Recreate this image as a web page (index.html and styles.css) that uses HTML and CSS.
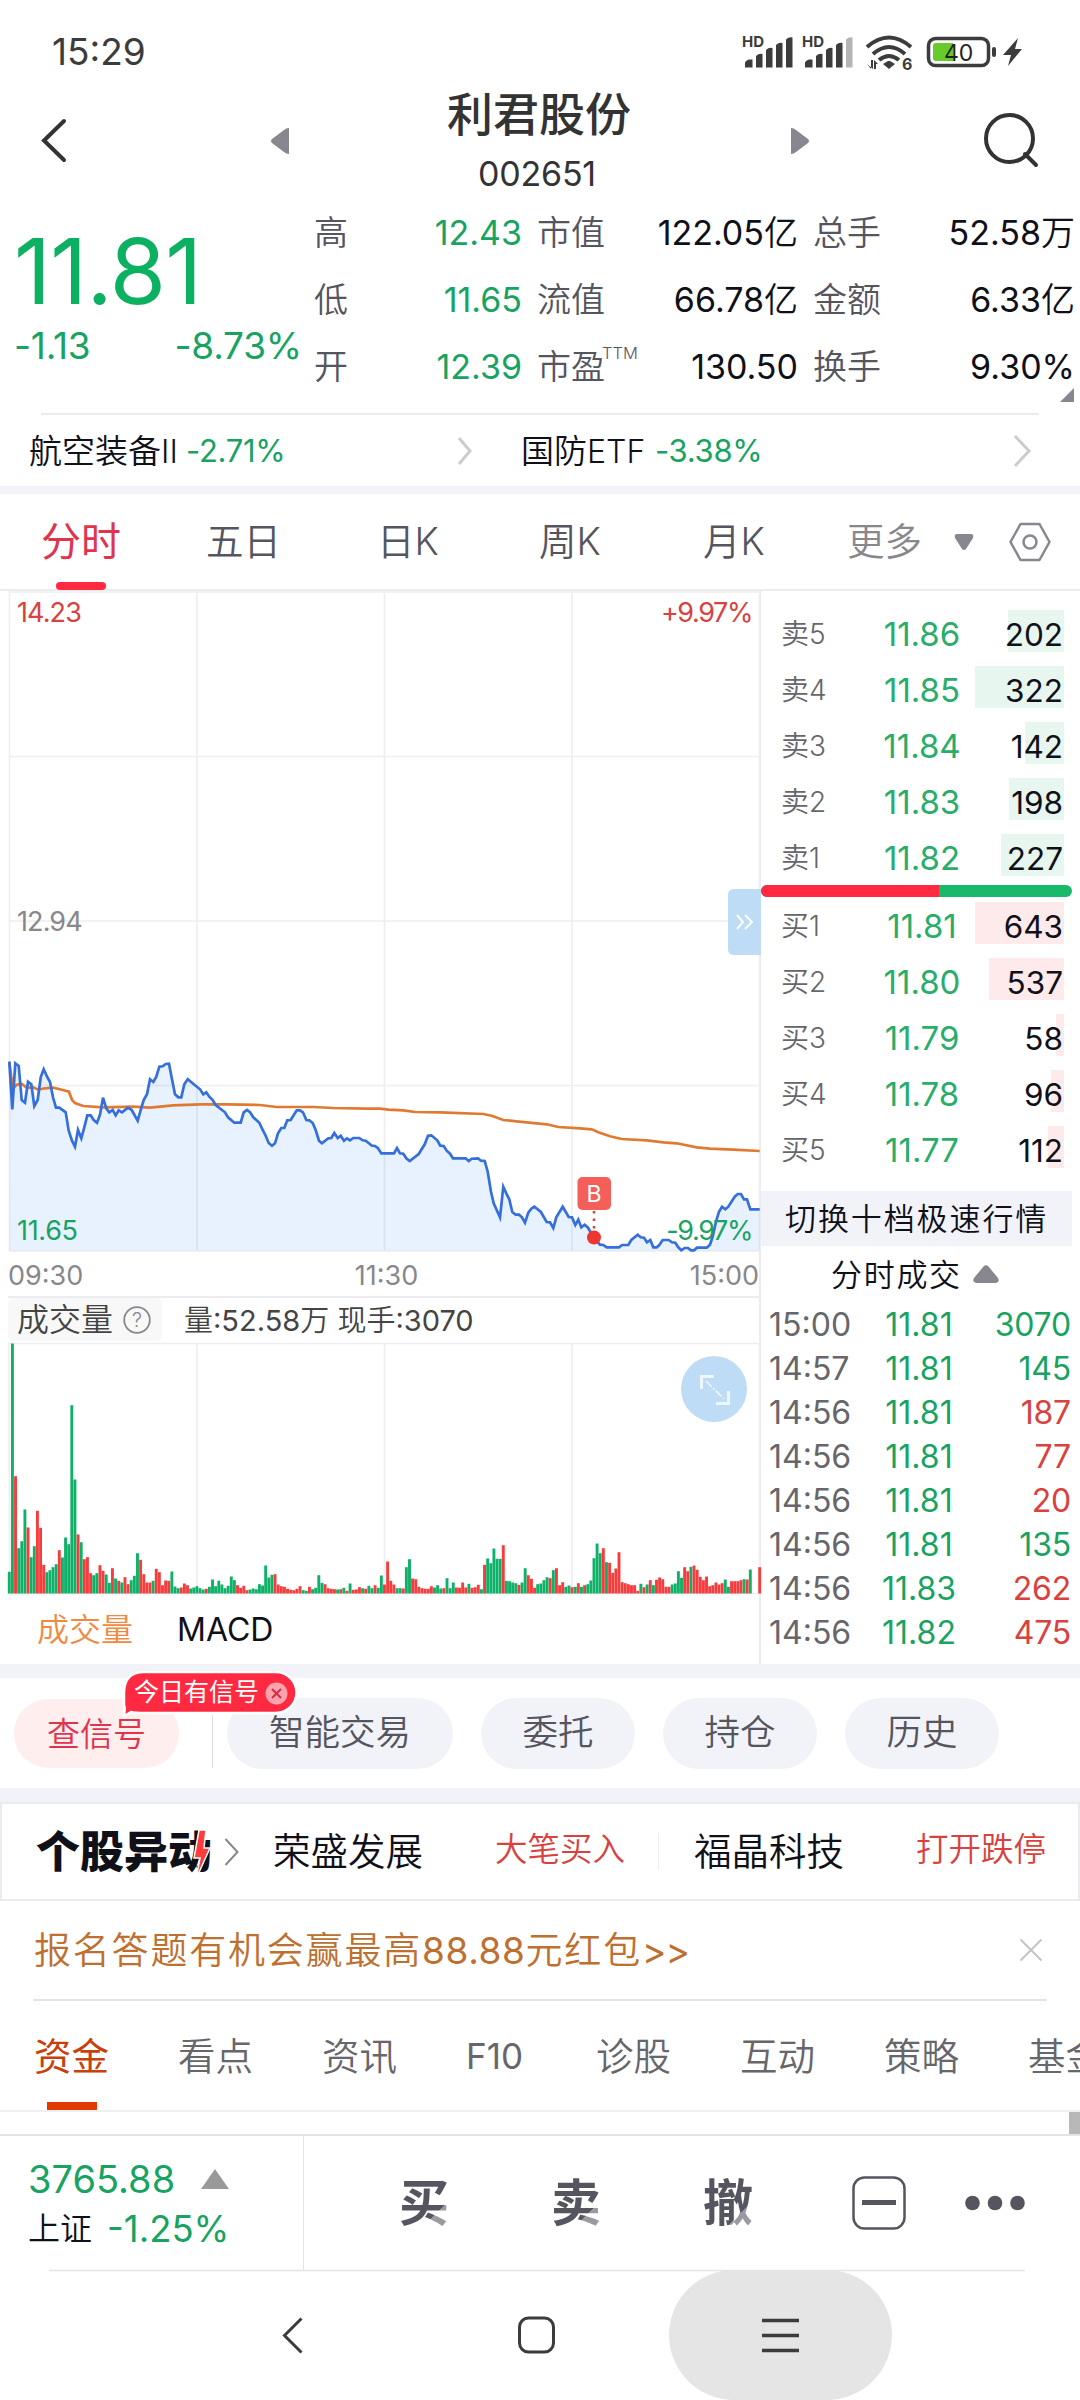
FILE: index.html
```html
<!DOCTYPE html>
<html lang="zh-CN">
<head>
<meta charset="utf-8">
<title>利君股份 002651</title>
<link rel="stylesheet" href="styles.css">
</head>
<body>
<div class="status">
  <span class="clock">15:29</span>
  <svg class="status-icons" width="310" height="60" viewBox="0 0 310 60">
    <g fill="#3c3c3c">
      <g id="sim"><path d="M15 47.500V43q0-2 4-3.500h3.500v8zM26 47.500V36q3-3 6.500-2v13.500zM36 47.500V30q3-3 6.500-2v19.500zM46 47.500V25q3-3 6.500-2v24.500z"/></g>
      <path d="M56 47.500V19.500q3-3 6.500-2v30z"/>
      <use href="#sim" x="60"/>
      <path d="M116 47.500V19.500q3-3 6.500-2v30z" fill="#b4b4b4"/>
      <path d="M273 35l15-17-3 11h7l-14 17 3-11z"/>
      <rect x="262" y="27" width="4" height="10" rx="2"/>
      <path d="M153 44l5-3h2l5 3-6 5z"/>
      <path d="M137 44l4 5v-9h2v9zM144 49v-9l4 4h-2v5z"/>
    </g>
    <text class="hd" x="12" y="27">HD</text><text class="hd" x="72" y="27">HD</text>
    <g fill="none" stroke="#3c3c3c" stroke-width="4"><path d="M137 27q22-19 44 0M143 34q16-14 32 0M149 40q10-8 20 0"/></g>
    <text class="six" x="172" y="49.500">6</text>
    <rect x="198.500" y="18.500" width="60" height="27" rx="7" fill="none" stroke="#3c3c3c" stroke-width="3.500"/>
    <path d="M203 26q0-3 3-3h17v18h-17q-3 0-3-3z" fill="#67cc2b"/>
    <text class="bat" x="214" y="40.500">40</text>
  </svg>
</div>

<header class="header">
  <svg width="40" height="60" viewBox="36 110 40 60"><path d="M64 121L44 140.500 64 160" class="ic"/></svg>
  <svg class="prev" width="20" height="30" viewBox="270 125 20 30"><path d="M289 128v26q-3 0-5-2l-12-9q-2-2 0-4l12-9q2-2 5-2z" fill="#88878f"/></svg>
  <div class="title"><h1>利君股份</h1><span>002651</span></div>
  <svg class="next" width="20" height="30" viewBox="790 125 20 30"><path d="M791 128v26q3 0 5-2l12-9q2-2 0-4l-12-9q-2-2-5-2z" fill="#88878f"/></svg>
  <svg class="search" width="60" height="60" viewBox="980 110 60 60"><circle cx="1009.500" cy="138.500" r="23.500" class="ic"/><path d="M1025 154l11 11" class="ic"/></svg>
</header>

<section class="quote green">
  <div class="last">
    <div class="price">11.81</div>
    <div class="chg"><span>-1.13</span><span>-8.73%</span></div>
  </div>
  <div class="stats">
    <span class="k">高</span><span class="v green">12.43</span><span class="k">市值</span><span class="v">122.05<i>亿</i></span><span class="k">总手</span><span class="v">52.58<i>万</i></span>
    <span class="k">低</span><span class="v green">11.65</span><span class="k">流值</span><span class="v">66.78<i>亿</i></span><span class="k">金额</span><span class="v">6.33<i>亿</i></span>
    <span class="k">开</span><span class="v green">12.39</span><span class="k">市盈<sup>TTM</sup></span><span class="v">130.50</span><span class="k">换手</span><span class="v">9.30%</span>
    <svg class="corner" width="14" height="14"><path d="M14 0v14H0z" fill="#88878f"/></svg>
  </div>
</section>

<section class="sectors">
  <span class="s1">航空装备<i>II</i></span><b class="p1">-2.71%</b>
  <svg class="c1" width="20" height="34" viewBox="0 0 20 34"><path d="M4 4l11 13L4 30" class="chev"/></svg>
  <span class="s2">国防<i>ETF</i></span><b class="p2">-3.38%</b>
  <svg class="c2" width="22" height="36" viewBox="0 0 22 36"><path d="M4 3l14 15L4 33" class="chev"/></svg>
</section>
<div class="band thin"></div>

<nav class="ktabs">
  <span class="on">分时</span><span>五日</span><span>日K</span><span>周K</span><span>月K</span><span class="more">更多</span>
  <svg width="20" height="18" viewBox="0 0 20 18"><path d="M3 1h14q3 0 2 4l-7 11q-2 2-4 0L1 5q-1-4 2-4z" fill="#88878f"/></svg>
  <svg class="hex" width="44" height="42" viewBox="0 0 44 42"><path d="M12.500 3h19l10 18-10 18h-19l-10-18z" fill="none" stroke="#88878f" stroke-width="2.500" stroke-linejoin="round"/><circle cx="22" cy="21" r="6.500" fill="none" stroke="#88878f" stroke-width="2.500"/></svg>
</nav>

<main class="main">
  <div class="left">
    <div class="chart">
      <svg id="price" width="761" height="661" viewBox="0 591 761 661">
        <g class="grid"><path d="M9.500 592H759.500V1251H9.500zM197 592v659M384.500 592v659M572 592v659M9.500 756.500H759.500M9.500 921H759.500M9.500 1085.500H759.500"/></g>
        <path id="area" fill="#2b7bf3" fill-opacity=".11"/>
        <path id="avg" class="avg"/>
        <path id="line" class="line"/>
        <path d="M594 1211v22" stroke="#d8413e" stroke-width="2.500" stroke-dasharray="2.500 5"/>
        <circle cx="594" cy="1237.500" r="7" fill="#ef352f"/>
        <rect x="577.500" y="1177" width="33.500" height="33" rx="5" fill="#f46059"/>
        <text class="mark" x="594" y="1201.500" text-anchor="middle">B</text>
        <path d="M761 889h-27q-6 0-6 6v54q0 6 6 6h27z" fill="#bfdcf6"/>
        <path d="M737 915l6 7-6 7M745 915l7 7-7 7" fill="none" stroke="#fff" stroke-width="2"/>
      </svg>
      <span class="lab tl red">14.23</span><span class="lab tr red">+9.97%</span>
      <span class="lab ml">12.94</span>
      <span class="lab bl green">11.65</span><span class="lab br green">-9.97%</span>
    </div>
    <div class="axis"><span>09:30</span><span>11:30</span><span>15:00</span></div>
    <div class="volhead"><div class="volname">成交量<svg width="30" height="30" viewBox="0 0 30 30"><circle cx="15" cy="15" r="12.800" fill="none" stroke="#88878c" stroke-width="1.800"/><text x="15" y="22" text-anchor="middle">?</text></svg></div><span><i>量</i>:52.58<i>万</i> <i>现手</i>:3070</span></div>
    <div class="volume">
      <svg width="761" height="251" viewBox="0 1343 761 251">
        <g class="grid"><path d="M9 1343.500H759.500V1593.500H9.500zM197 1343v250M384.500 1343v250M572 1343v250"/></g>
        <g id="bars"></g>
        <circle cx="714" cy="1389" r="33" fill="#bfdcf6"/>
        <path d="M701.500 1389v-12.500H714M728.500 1391v12.500H716" fill="none" stroke="#eef8ff" stroke-width="3"/>
        <path d="M706 1381l18 18" stroke="#eef8ff" stroke-width="1.500" stroke-dasharray="8 2 2 2"/>
      </svg>
    </div>
    <div class="indic"><span class="orange">成交量</span><span class="macd">MACD</span></div>
  </div>
  <div class="right">
    <div class="book" id="asks">
      <div class="row sell"><span>卖5</span><b>11.86</b><em><u style="width:56px"></u>202</em></div>
      <div class="row sell"><span>卖4</span><b>11.85</b><em><u style="width:89px"></u>322</em></div>
      <div class="row sell"><span>卖3</span><b>11.84</b><em><u style="width:39px"></u>142</em></div>
      <div class="row sell"><span>卖2</span><b>11.83</b><em><u style="width:55px"></u>198</em></div>
      <div class="row sell"><span>卖1</span><b>11.82</b><em><u style="width:63px"></u>227</em></div>
    </div>
    <div class="ratio"><div></div></div>
    <div class="book">
      <div class="row buy"><span>买1</span><b>11.81</b><em><u style="width:89px"></u>643</em></div>
      <div class="row buy"><span>买2</span><b>11.80</b><em><u style="width:75px"></u>537</em></div>
      <div class="row buy"><span>买3</span><b>11.79</b><em><u style="width:8px"></u>58</em></div>
      <div class="row buy"><span>买4</span><b>11.78</b><em><u style="width:13px"></u>96</em></div>
      <div class="row buy"><span>买5</span><b>11.77</b><em><u style="width:16px"></u>112</em></div>
    </div>
    <div class="switch">切换十档极速行情</div>
    <div class="ticktitle">分时成交<svg width="26" height="19" viewBox="0 0 26 19"><path d="M10.500 1.500q2.500-2.500 5 0L25 13q2 4-2 5H3q-4-1-2-5z" fill="#88878f"/></svg></div>
    <div class="ticks">
      <div><span>15:00</span><b>11.81</b><em class="green">3070</em></div>
      <div><span>14:57</span><b>11.81</b><em class="green">145</em></div>
      <div><span>14:56</span><b>11.81</b><em class="red">187</em></div>
      <div><span>14:56</span><b>11.81</b><em class="red">77</em></div>
      <div><span>14:56</span><b>11.81</b><em class="red">20</em></div>
      <div><span>14:56</span><b>11.81</b><em class="green">135</em></div>
      <div><span>14:56</span><b>11.83</b><em class="red">262</em></div>
      <div><span>14:56</span><b>11.82</b><em class="red">475</em></div>
      <div><span>14:56</span><b>11.82</b><em class="green">18</em></div>
    </div>
  </div>
</main>

<div class="band"></div>
<section class="actions">
  <span class="pill hot">查信号</span><span class="sep"></span>
  <span class="pill wide">智能交易</span><span class="pill">委托</span><span class="pill">持仓</span><span class="pill">历史</span>
  <div class="tip">
    <svg width="179" height="46" viewBox="0 0 179 46"><path d="M23 2h132a20.500 20.500 0 0 1 0 41H23q-9 0-13-1-4 3-8 4 3-6 1-11V23Q3 2 23 2z" fill="#ff2a42" stroke="#fff" stroke-width="2.500"/><circle cx="155.500" cy="23.500" r="11" fill="#ffa3ae"/><path d="M151 19l9 9m0-9l-9 9" stroke="#d42c42" stroke-width="2"/></svg>
    <span>今日有信号</span>
  </div>
</section>
<div class="band"></div>

<section class="movers">
  <div class="logo">个股异动<svg width="22" height="50" viewBox="0 0 22 50"><path d="M11 0h7l-2 18h6L8 49l4-21H6z" fill="#ff3b3b" stroke="#fff" stroke-width="1.500"/></svg></div>
  <svg class="mc" width="18" height="32" viewBox="0 0 18 32"><path d="M2.500 3l12 13-12 13" fill="none" stroke="#88878c" stroke-width="2"/></svg>
  <span class="name">荣盛发展</span><span class="act">大笔买入</span><span class="msep"></span><span class="name n2">福晶科技</span><span class="act a2">打开跌停</span>
</section>

<section class="banner"><span>报名答题有机会赢最高<b>88.88</b>元红包<b>&gt;&gt;</b></span><svg width="24" height="24" viewBox="0 0 24 24"><path d="M1.500 1.500l21 21m0-21l-21 21" stroke="#c4c4c4" stroke-width="2"/></svg></section>

<nav class="itabs"><span class="on">资金</span><span>看点</span><span>资讯</span><span class="f">F10</span><span>诊股</span><span>互动</span><span>策略</span><span>基金</span></nav>
<div class="peek"><i></i></div>

<footer class="trade">
  <div class="index"><div><b>3765.88</b><svg width="28" height="20" viewBox="0 0 28 20"><path d="M14 0l14 20H0z" fill="#999"/></svg></div><div><span>上证</span><b>-1.25%</b></div></div>
  <span class="big b1">买</span><span class="big b2">卖</span><span class="big b3">撤</span>
  <svg class="box" width="54" height="54" viewBox="0 0 54 54"><rect x="1.500" y="1.500" width="51" height="51" rx="11" fill="none" stroke="#55555f" stroke-width="2.500"/><path d="M10 26.500h34" stroke="#55555f" stroke-width="5"/></svg>
  <svg class="dots" width="60" height="16" viewBox="0 0 60 16"><g fill="#55555f"><circle cx="7.500" cy="8" r="7.300"/><circle cx="30" cy="8" r="7.300"/><circle cx="52.500" cy="8" r="7.300"/></g></svg>
</footer>
<nav class="sysnav">
  <svg width="1080" height="130" viewBox="0 2270 1080 130"><rect x="669" y="2270" width="223" height="130" rx="65" fill="#e5e5e5"/><path d="M49 2270.500H1025" stroke="#e4e4e4" stroke-width="1.500"/><g fill="none" stroke="#3c3c3c" stroke-width="3"><path d="M301.500 2318.500L284.500 2335.500 301.500 2352.500"/><rect x="519.500" y="2318" width="34" height="34" rx="9"/><path d="M762 2320.500H799M762 2335.500H799M762 2350.500H799" stroke-width="3.500"/></g></svg>
</nav>
<script src="chart.js"></script>
</body>
</html>
```
FILE: chart.js
```js
// Series are stored in thirds of a pixel; the second half starts at x = 1140.
var OX = 1140;
var priceA = '28,65 37,208 46,70 56,78 65,180 75,188 84,125 94,133 103,198 113,180 122,112 131,88 140,108 150,126 159,172 168,203 178,203 197,217 206,272 216,302 225,320 234,270 244,295 253,262 262,226 272,226 281,240 291,248 300,224 309,173 319,205 328,217 338,210 347,226 356,211 366,217 384,203 395,210 413,242 422,210 431,180 441,163 450,118 460,126 469,110 478,80 488,79 497,72 507,71 516,118 525,163 535,172 544,172 553,133 563,118 600,148 610,163 619,157 628,170 638,180 647,195 675,217 684,232 703,248 722,248 731,217 741,210 750,217 760,232 778,248 788,270 797,287 806,309 816,317 825,310 834,280 844,264 853,264 862,241 872,240 890,211 900,211 909,217 919,240 928,241 938,249 947,270 957,302 966,310 985,295 994,294 1003,279 1013,294 1022,287 1032,302 1041,295 1050,301 1060,294 1078,294 1088,301 1097,302 1116,317 1125,318 1134,325';
var priceB = '4,340 42,340 51,324 60,340 70,341 79,355 89,363 116,342 134,313 144,287 154,286 172,301 181,317 191,318 200,332 210,341 219,355 257,355 266,363 275,356 294,355 303,362 314,363 323,395 333,455 341,490 360,532 370,440 379,460 388,478 397,516 407,524 417,524 426,532 435,548 445,518 454,506 463,500 482,515 500,546 510,547 520,564 529,532 548,500 566,531 576,532 586,555 595,539 604,562 614,554 624,563 633,578 641,593 660,614 670,615 680,622 717,622 726,615 745,615 754,600 773,584 782,592 792,593 801,607 811,600 820,622 830,622 838,615 848,600 866,600 876,607 886,608 895,622 904,631 914,624 924,624 933,631 942,631 951,623 980,623 990,614 998,590 1008,545 1017,515 1026,500 1036,508 1045,500 1064,470 1073,462 1083,462 1092,478 1101,478 1111,508 1139,508';
var avgA = '28,65 34,110 40,145 50,134 65,132 80,143 100,142 115,149 135,145 160,143 185,149 207,155 216,180 225,189 250,198 310,202 400,200 450,203 520,196 600,193 680,193 780,195 830,201 940,201 1000,204 1100,206';
var avgB = '0,206 25,209 70,211 105,216 180,217 310,222 335,227 370,240 410,244 500,253 535,261 600,265 635,268 655,277 690,289 725,297 800,301 850,307 890,310 950,322 990,326 1060,329 1139,333';
var volume = 'g65 g750 r352 g136 g157 g252 r198 g109 g142 r248 r197 r86 g64 g70 g79 g88 r130 g108 g168 g148 g565 g342 r177 g154 r103 r109 r61 g55 g61 r85 r68 g57 g32 r76 g45 r38 g33 r49 r28 g40 g53 g121 r101 r58 r33 r33 g38 r74 r64 r25 r39 r38 g66 g21 g16 r18 r30 r25 g15 g18 g22 g16 g12 r14 g20 g42 g22 g38 g27 g16 g23 g51 g40 r25 r17 r23 r10 g12 g15 g13 g28 g24 g84 g48 g56 r58 r27 r22 r20 r14 r11 r10 r14 r22 g10 g8 r20 g13 g17 g55 g32 r28 r16 r14 r13 g12 r13 g17 r8 g30 r11 r12 r19 g16 r14 g23 g16 r25 g17 g54 r27 r96 r38 r27 g16 g16 r15 g79 g103 r45 r43 r20 r16 r14 r14 r22 g18 g25 g15 r16 g46 g16 g33 r18 r17 r33 r18 g29 r17 r19 r26 g13 r86 g105 g91 g135 g104 g104 r145 g38 g37 g33 g31 r26 g33 g76 r55 r44 r17 g28 g30 g40 g49 r46 g70 r76 r25 r34 g20 g24 r19 g20 r31 g20 r25 g28 g39 g106 g150 g121 r136 g94 r92 r62 r75 r124 r34 r31 r28 r25 r25 r8 g29 r19 g27 r40 g25 r41 r48 r43 r20 r20 g27 g30 g67 g47 r79 r67 g80 r84 r71 r50 r40 r51 r22 r25 r33 r27 r31 g42 g20 r37 r37 r37 r40 g43 r42 g72 g0 g0 r79';

function points(text, offset) {
  return text.split(' ').map(function (pair) {
    var p = pair.split(',');
    return ((+p[0] + offset) / 3).toFixed(1) + ' ' + (1040 + p[1] / 3).toFixed(1);
  });
}
function path(a, b) { return 'M' + points(a, 0).concat(points(b, OX)).join('L'); }

var price = path(priceA, priceB);
document.getElementById('line').setAttribute('d', price);
document.getElementById('area').setAttribute('d', price + 'V1250.5H9.500Z');
document.getElementById('avg').setAttribute('d', path(avgA, avgB));

document.getElementById('bars').innerHTML = volume.split(' ').map(function (v, k) {
  var h = v.slice(1) / 3, x = (28 + 9.38 * k) / 3 - 1.5;
  return '<rect class="' + (v[0] === 'g' ? 'up' : 'down') + '" x="' + x.toFixed(2) + '" y="' + (1593.5 - h).toFixed(1) + '" width="2.9" height="' + h.toFixed(1) + '"/>';
}).join('');
```
FILE: styles.css
```css
* { box-sizing: border-box; }
body { margin: 0; width: 1080px; height: 2400px; overflow: hidden; background: #fff; color: #101018; font-family: Inter, "Noto Sans CJK SC", sans-serif; font-weight: 350; white-space: nowrap; }
svg { display: block; flex: none; overflow: visible; }
i, em { font-style: normal; }
b, em { font-weight: 400; }
u { text-decoration: none; }
.green { color: #18a362; }
.red { color: #d8413e; }
.ic { fill: none; stroke: #333; stroke-width: 4; stroke-linecap: round; }
.chev { fill: none; stroke: #ccc; stroke-width: 3; }

.status { height: 84px; display: flex; justify-content: space-between; padding: 20px 40px 0 52px; }
.clock { font-size: 37px; line-height: 64px; color: #3c3c3c; font-weight: 400; }
.status-icons text { fill: #3c3c3c; }
.hd { font-size: 15px; font-weight: 700; }
.six { font-size: 16px; font-weight: 700; }
.status-icons .bat { font-size: 23px; font-weight: 400; fill: #222; }

.header { height: 116px; display: flex; padding: 0 40px 0 36px; }
.header > svg { margin-top: 26px; }
.header .prev, .header .next { margin-top: 41px; }
.prev { margin-left: 194px; }
.title { width: 500px; text-align: center; color: #333; }
.title h1 { margin: 0 2px 0 0; font-size: 46px; line-height: 60px; font-weight: 500; }
.title span { display: block; margin-right: 6px; font-size: 34px; line-height: 60px; font-weight: 400; letter-spacing: -.2px; }
.search { margin-left: auto; }

.quote { height: 213px; display: flex; }
.last { width: 302px; padding-left: 14px; }
.price { font-size: 91px; line-height: 142px; letter-spacing: -.8px; color: #0cb061; font-weight: 400; }
.chg { display: flex; justify-content: space-between; font-size: 37px; line-height: 8px; font-weight: 400; letter-spacing: -.2px; }
.stats { position: relative; width: 778px; padding: 0 5px 0 12px; display: grid; grid-template-columns: 31px 177px 84px 192px 83px 194px; grid-template-rows: 67px 67px 68px; line-height: 66px; font-size: 34px; color: #101018; }
.stats .k { color: #55555f; }
.stats .k:nth-of-type(6n+3), .stats .k:nth-of-type(6n+5) { padding-left: 15px; }
.stats .v { text-align: right; font-weight: 400; }
.stats .v i { font-size: 34px; font-weight: 350; }
.stats sup { font-size: 16.500px; line-height: 1px; position: relative; top: -8px; left: -3px; }
.corner { position: absolute; right: 6px; top: 188px; }

.sectors { height: 73px; margin: 0 41px; padding-top: 1px; border-top: 2px solid #ececf0; display: flex; align-items: center; font-size: 33px; line-height: 70px; }
.sectors span { margin-left: -12px; width: 157px; }
.sectors i { font-size: 32px; }
.sectors b { color: #18a362; font-size: 31px; letter-spacing: -.3px; }
.p1 { width: 269px; }
.c1 { width: 20px; }
.sectors .s2 { margin-left: 46px; width: 134px; }
.p2 { width: 356px; }

.band { height: 14px; background: #f2f3f8; }
.band.thin { height: 8px; }

.ktabs { height: 97px; display: flex; align-items: center; padding-left: 41px; font-size: 37.500px; line-height: 96px; color: #55555f; border-bottom: 2px solid #ececee; }
.ktabs span { margin-right: 70px; flex: none; }
.ktabs span:nth-child(1) { width: 80px; margin-right: 85px; font-size: 40px; }
.ktabs span:nth-child(2) { width: 74px; margin-right: 97px; }
.ktabs span:nth-child(3) { width: 60px; margin-right: 102px; }
.ktabs span:nth-child(4) { width: 62px; margin-right: 102px; }
.ktabs span:nth-child(5) { width: 62px; margin-right: 82px; }
.ktabs .more { width: 75px; margin-right: 32px; color: #88878c; }
.ktabs .on { position: relative; color: #e0344d; font-weight: 400; }
.ktabs .on::after { content: ""; position: absolute; left: 15px; bottom: 0; width: 50px; height: 8px; border-radius: 4px; background: #ff2a42; }
.hex { margin-left: 34px; }

.main { height: 1073px; display: flex; overflow: hidden; }
.left { width: 761px; border-right: 2px solid #ececf0; }
.grid { fill: none; stroke: #eeeef0; stroke-width: 1.600; }
.line { fill: none; stroke: #356fdb; stroke-width: 2.700; }
.avg { fill: none; stroke: #e07a30; stroke-width: 2.700; }
.mark { font-size: 23px; fill: #fff; font-weight: 400; }
.chart { position: relative; height: 661px; }
.lab { position: absolute; font-size: 27px; line-height: 32px; color: #88878c; font-weight: 400; letter-spacing: -.9px; }
.lab.red { color: #d8413e; }
.lab.green { color: #18a362; letter-spacing: -.3px; }
.tl, .ml, .bl { left: 17px; }
.tr, .br { right: 7px; }
.tl, .tr { top: 6px; }
.ml { top: 315px; }
.bl, .br { top: 624px; }
.lab.br, .lab.tr { letter-spacing: -1.400px; }
.axis { height: 46px; margin: 0 0 0 8px; display: flex; justify-content: space-between; font-size: 27px; line-height: 47px; color: #88878c; font-weight: 400; border-bottom: 2px solid #ececf0; }
.volhead { height: 45px; display: flex; color: #444; padding-left: 8px; line-height: 43px; }
.volname { width: 154px; height: 43px; padding-left: 9px; display: flex; align-items: center; font-size: 32px; background: #f8f8f9; border-radius: 6px; }
.volname svg { margin-left: 9px; }
.volname text { font-size: 20px; fill: #88878c; }
.volhead > span { margin-left: 22px; font-size: 29px; line-height: 46px; font-weight: 400; }
.volhead i { font-weight: 350; }
.volume { height: 251px; }
.up { fill: #0fb067; }
.down { fill: #f53d3d; }
.indic { display: flex; font-size: 32px; line-height: 72px; padding-left: 37px; height: 70px; }
.orange { color: #f08a40; width: 140px; }
.macd { font-size: 32px; font-weight: 400; }

.right { width: 311px; }
#asks { padding-top: 15px; }
.row { height: 56px; line-height: 57px; display: grid; grid-template-columns: 99px 84px 99px; padding-left: 20px; font-size: 28px; }
.row span { color: #66666b; }
.row b { text-align: center; font-size: 33px; color: #28ad6b; }
.row em { position: relative; text-align: right; font-size: 31.500px; z-index: 0; }
.row u { position: absolute; z-index: -1; right: -1px; top: 4px; height: 42px; }
.sell u { background: #e7f6ef; }
.buy u { background: #feeaea; }
.ratio { height: 12px; margin: -1px 0 1px; border-radius: 6px; background: #19b96b; overflow: hidden; }
.ratio div { width: 178px; height: 12px; background: #ff2a42; }
.switch { margin-top: 13px; height: 55px; line-height: 55px; background: #f2f3f8; font-size: 31px; letter-spacing: 1.900px; padding-left: 24px; }
.ticktitle { display: flex; align-items: center; height: 57px; padding-left: 70px; font-size: 31px; letter-spacing: 1.700px; line-height: 54px; }
.ticktitle svg { margin-left: 11px; }
.ticks div { display: grid; grid-template-columns: 100px 100px 102px; height: 44px; line-height: 44px; padding-left: 8px; font-size: 32px; }
.ticks span { color: #66666b; font-weight: 400; }
.ticks b { text-align: center; color: #18a362; }
.ticks em { text-align: right; letter-spacing: -.2px; }

.actions { position: relative; height: 110px; display: flex; align-items: center; padding-left: 14px; }
.pill { width: 154px; height: 71px; line-height: 70px; border-radius: 36px; background: #f2f3f8; text-align: center; font-size: 35.500px; color: #55555f; margin-right: 28px; }
.pill.hot { width: 165px; height: 69px; background: #ffeeee; color: #e0344d; font-size: 33px; margin-right: 33px; }
.pill.wide { width: 226px; }
.sep { width: 1px; height: 53px; background: #ddd; margin: 16px 14px 0 0; }
.tip { position: absolute; left: 121px; top: -8px; }
.tip span { position: absolute; left: 13px; top: 2px; font-size: 25px; line-height: 40px; color: #fff; font-weight: 400; }

.movers { height: 99px; border: 2px solid #ebebed; display: flex; align-items: center; padding-left: 34px; }
.logo { position: relative; width: 187px; font-size: 44px; font-weight: 900; line-height: 90px; color: #101018; }
.logo svg { position: absolute; left: 152px; top: 23px; }
.mc { width: 18px; }
.movers .name { margin-left: 32px; width: 151px; font-size: 37.500px; line-height: 90px; }
.movers .act { margin-left: 71px; width: 130px; font-size: 32.500px; line-height: 88px; padding-bottom: 3px; color: #d8413e; }
.msep { width: 1px; height: 37px; margin-left: 33px; background: #eee; }
.movers .n2 { margin-left: 35px; }

.banner { height: 100px; margin: 0 33px; padding: 0 4px 0 1px; display: flex; align-items: center; justify-content: space-between; border-bottom: 2px solid #e4e4e6; color: #bd7030; font-size: 37px; letter-spacing: 1.800px; }
.banner span { margin-top: -5px; }
.banner b { font-size: 37px; letter-spacing: .6px; }
.banner b:last-child { letter-spacing: -1px; }

.itabs { height: 111px; display: flex; padding-left: 34px; overflow: hidden; font-size: 37.500px; line-height: 111px; color: #66666b; border-bottom: 2px solid #efefef; }
.itabs span { width: 75px; margin-right: 69px; flex: none; }
.itabs .f { width: 60px; margin-right: 70px; font-size: 35px; font-weight: 400; }
.itabs .on { color: #c9400e; font-weight: 400; background: linear-gradient(#e03a00, #e03a00) center bottom / 50px 8px no-repeat; }
.peek { height: 22px; display: flex; justify-content: flex-end; }
.peek i { width: 11px; background: #b8b8b8; }

.trade { height: 136px; display: flex; align-items: center; border-top: 2px solid #e4e4e6; }
.index { width: 304px; height: 134px; border-right: 1px solid #e4e4e6; padding: 18px 0 0 28px; color: #18a362; }
.index div { display: flex; align-items: center; height: 50px; font-size: 38px; line-height: 50px; }
.index svg { margin-left: auto; margin-right: 74px; }
.index span { width: 79px; font-size: 32px; color: #101018; }
.index div + div { font-size: 36.500px; }
.big { font-size: 50px; font-weight: 700; line-height: 52px; margin-left: 95px; width: 50px; color: transparent; background: linear-gradient(135deg, #55555f 72%, #9a9aa0 72%); background-clip: text; -webkit-background-clip: text; }
.big.b2, .big.b3 { margin-left: 102px; }
.box { margin-left: 99px; }
.dots { margin-left: 59px; }
.sysnav { height: 130px; }
```
